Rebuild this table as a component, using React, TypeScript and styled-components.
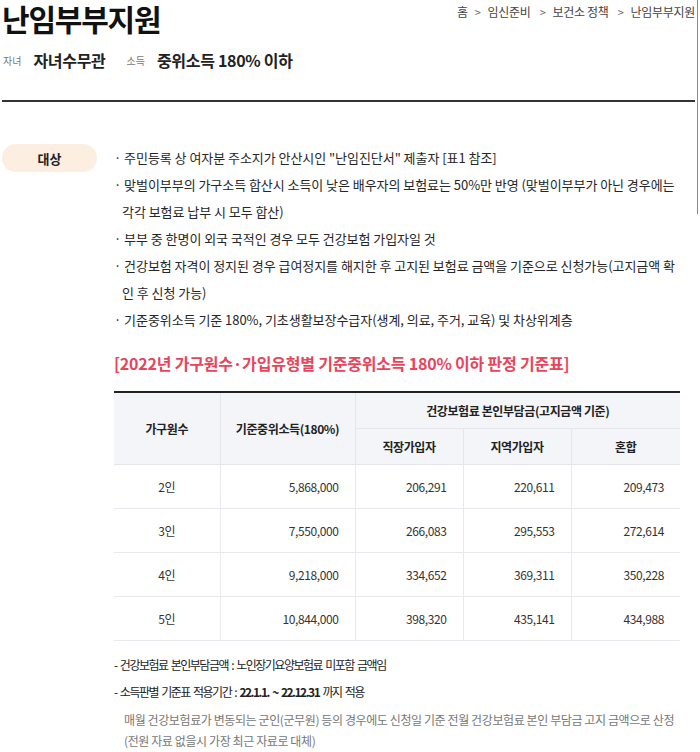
import React from "react";
import styled, { createGlobalStyle } from "styled-components";

const Global = createGlobalStyle`
  html, body { margin: 0; padding: 0; background: #fff; }
  body { font-family: "Noto Sans CJK KR", "Noto Sans", sans-serif; color: #222; }
  * { box-sizing: border-box; }
`;

const Page = styled.div`
  position: relative;
  width: 700px;
  height: 752px;
  overflow: hidden;
  padding: 0 5px 0 2px;
`;

const ScrollEdge = styled.div`
  position: absolute;
  top: 0;
  right: 2px;
  width: 1px;
  height: 214px;
  background: #8a8a8a;
`;

const TopBar = styled.header`
  display: flex;
  justify-content: space-between;
  align-items: flex-start;
`;

const Title = styled.h1`
  margin: 0;
  padding-top: 1px;
  font-size: 30px;
  line-height: 35px;
  font-weight: 700;
  letter-spacing: -1.2px;
  color: #111;
`;

const Crumbs = styled.nav`
  display: flex;
  gap: 7px;
  font-size: 12px;
  line-height: 24px;
  color: #444;
  letter-spacing: -0.3px;
`;

const Crumb = styled.span<{ $sep?: boolean }>`
  color: ${(p) => (p.$sep ? "#666" : "#444")};
  font-size: ${(p) => (p.$sep ? "11px" : "12px")};
`;

const InfoRow = styled.div`
  display: flex;
  align-items: center;
  margin-top: 12px;
  height: 24px;
  padding-left: 1px;
`;

const InfoLabel = styled.span`
  font-size: 10px;
  color: #777;
  margin-right: 12px;
`;

const InfoValue = styled.span`
  font-size: 16px;
  font-weight: 700;
  color: #222;
  letter-spacing: -0.3px;
  margin-right: 21px;
`;

const Rule = styled.hr`
  margin: 28px 0 0 0;
  border: none;
  height: 2px;
  background: #333;
`;

const Section = styled.section`
  display: flex;
  margin-top: 42px;
`;

const Badge = styled.div`
  width: 95px;
  height: 28px;
  flex: none;
  border-radius: 14px;
  background: #fdeee2;
  display: flex;
  align-items: center;
  justify-content: center;
  font-size: 13px;
  font-weight: 700;
  color: #222;
`;

const Body = styled.div`
  margin-left: 17px;
  flex: 1;
`;

const Bullets = styled.ul`
  list-style: none;
  margin: 0;
  padding: 0;
  font-size: 13px;
  line-height: 27px;
  color: #262626;
  letter-spacing: -0.05px;
  white-space: nowrap;
`;

const Bullet = styled.li`
  padding-left: 8px;
  text-indent: -8px;
`;

const TableTitle = styled.h2`
  margin: 18px 0 0 0;
  font-size: 16px;
  line-height: 24px;
  font-weight: 700;
  color: #e8445b;
  letter-spacing: -0.2px;
`;

const Table = styled.table`
  margin-top: 16px;
  width: 566px;
  border-collapse: collapse;
  border-top: 2px solid #222;
  font-size: 12px;
  color: #333;
  letter-spacing: -0.4px;
`;

const Th = styled.th<{ $w?: number }>`
  background: #f4f5f9;
  font-weight: 700;
  color: #222;
  height: 36px;
  padding: 0;
  border: 1px solid #e4e6ec;
  ${(p) => (p.$w ? `width: ${p.$w}px;` : "")}
  &:first-child { border-left: none; }
  &:last-child { border-right: none; }
`;

const Td = styled.td<{ $align?: "center" | "right" }>`
  height: 44px;
  padding: 0 16px 0 0;
  text-align: ${(p) => p.$align ?? "right"};
  border: 1px solid #e8e9ee;
  border-top: none;
  &:first-child { border-left: none; padding: 0; }
  &:last-child { border-right: none; }
`;

const Notes = styled.div`
  margin-top: 14px;
  font-size: 12px;
  color: #222;
`;

const Note = styled.p`
  margin: 0 0 7px 0;
  line-height: 20px;
  letter-spacing: -1.5px;
  word-spacing: 2px;
`;

const Strong = styled.b`
  font-weight: 700;
`;

const SubNote = styled.p`
  margin: 0;
  padding-left: 10px;
  line-height: 21px;
  color: #777;
  letter-spacing: -0.4px;
`;

const rows = [
  ["2인", "5,868,000", "206,291", "220,611", "209,473"],
  ["3인", "7,550,000", "266,083", "295,553", "272,614"],
  ["4인", "9,218,000", "334,652", "369,311", "350,228"],
  ["5인", "10,844,000", "398,320", "435,141", "434,988"],
];

export default function App() {
  return (
    <Page>
      <Global />
      <ScrollEdge />
      <TopBar>
        <Title>난임부부지원</Title>
        <Crumbs>
          <Crumb>홈</Crumb>
          <Crumb $sep>&gt;</Crumb>
          <Crumb>임신준비</Crumb>
          <Crumb $sep>&nbsp;&gt;</Crumb>
          <Crumb>보건소 정책</Crumb>
          <Crumb $sep>&nbsp;&gt;</Crumb>
          <Crumb>난임부부지원</Crumb>
        </Crumbs>
      </TopBar>
      <InfoRow>
        <InfoLabel>자녀</InfoLabel>
        <InfoValue>자녀수무관</InfoValue>
        <InfoLabel>소득</InfoLabel>
        <InfoValue>중위소득 180% 이하</InfoValue>
      </InfoRow>
      <Rule />
      <Section>
        <Badge>대상</Badge>
        <Body>
          <Bullets>
            <Bullet>· 주민등록 상 여자분 주소지가 안산시인 "난임진단서" 제출자 [표1 참조]</Bullet>
            <Bullet>
              · 맞벌이부부의 가구소득 합산시 소득이 낮은 배우자의 보험료는 50%만 반영 (맞벌이부부가 아닌 경우에는
              <br />각각 보험료 납부 시 모두 합산)
            </Bullet>
            <Bullet>· 부부 중 한명이 외국 국적인 경우 모두 건강보험 가입자일 것</Bullet>
            <Bullet>
              · 건강보험 자격이 정지된 경우 급여정지를 해지한 후 고지된 보험료 금액을 기준으로 신청가능(고지금액 확
              <br />인 후 신청 가능)
            </Bullet>
            <Bullet>· 기준중위소득 기준 180%, 기초생활보장수급자(생계, 의료, 주거, 교육) 및 차상위계층</Bullet>
          </Bullets>
          <TableTitle>[2022년 가구원수·가입유형별 기준중위소득 180% 이하 판정 기준표]</TableTitle>
          <Table>
            <thead>
              <tr>
                <Th rowSpan={2} $w={106}>가구원수</Th>
                <Th rowSpan={2} $w={135}>기준중위소득(180%)</Th>
                <Th colSpan={3}>건강보험료 본인부담금(고지금액 기준)</Th>
              </tr>
              <tr>
                <Th $w={108}>직장가입자</Th>
                <Th $w={108}>지역가입자</Th>
                <Th>혼합</Th>
              </tr>
            </thead>
            <tbody>
              {rows.map((r) => (
                <tr key={r[0]}>
                  <Td $align="center">{r[0]}</Td>
                  <Td>{r[1]}</Td>
                  <Td>{r[2]}</Td>
                  <Td>{r[3]}</Td>
                  <Td>{r[4]}</Td>
                </tr>
              ))}
            </tbody>
          </Table>
          <Notes>
            <Note>- 건강보험료 본인부담금액 : 노인장기요양보험료 미포함 금액임</Note>
            <Note>
              - 소득판별 기준표 적용기간 : <Strong>22.1.1. ~ 22.12.31</Strong> 까지 적용
            </Note>
            <SubNote>매월 건강보험료가 변동되는 군인(군무원) 등의 경우에도 신청일 기준 전월 건강보험료 본인 부담금 고지 금액으로 산정</SubNote>
            <SubNote>(전원 자료 없을시 가장 최근 자료로 대체)</SubNote>
          </Notes>
        </Body>
      </Section>
    </Page>
  );
}
